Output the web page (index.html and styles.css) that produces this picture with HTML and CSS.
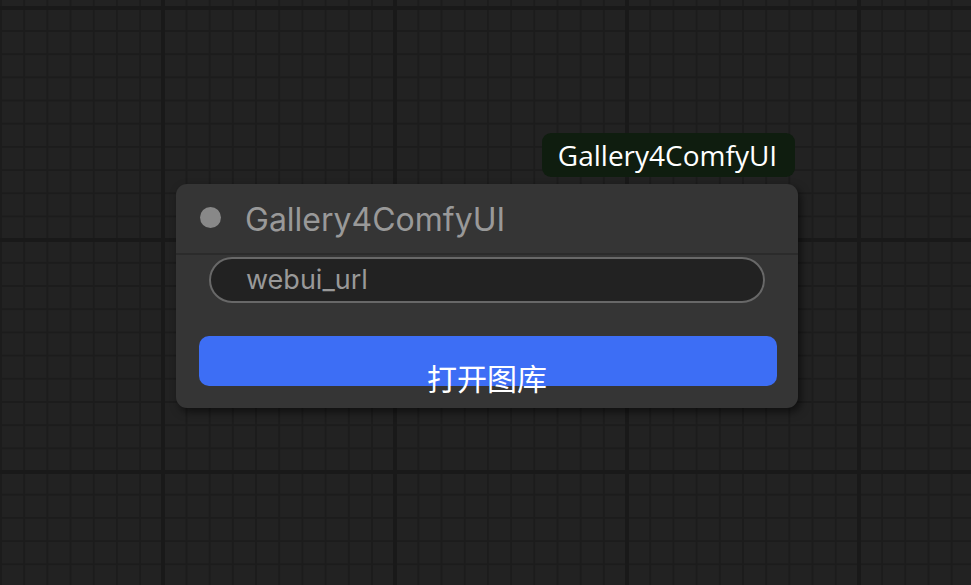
FILE: index.html
```html
<!DOCTYPE html>
<html lang="zh">
<head>
<meta charset="utf-8">
<title>Gallery4ComfyUI</title>
<link rel="stylesheet" href="styles.css">
</head>
<body>
<div class="canvas">
  <div class="tooltip">Gallery4ComfyUI</div>
  <div class="node">
    <div class="node-title">
      <span class="dot"></span>
      <span class="title-text">Gallery4ComfyUI</span>
    </div>
    <div class="node-body">
      <div class="text-widget">webui_url</div>
      <div class="button-widget"><span class="button-label">打开图库</span></div>
    </div>
  </div>
</div>
</body>
</html>
```
FILE: styles.css
```css
html, body {
  margin: 0;
  padding: 0;
  width: 100%;
  height: 100%;
  overflow: hidden;
}
body {
  background-color: #222222;
  font-family: Inter, "Liberation Sans", "Noto Sans CJK SC", sans-serif;
}
.canvas {
  position: relative;
  width: 971px;
  height: 585px;
  background-color: #222222;
  background-image:
    linear-gradient(to right, #191919 0, #191919 4px, transparent 4px),
    linear-gradient(to bottom, #191919 0, #191919 4px, transparent 4px),
    linear-gradient(to right, #1c1c1c 0, #1c1c1c 2px, transparent 2px),
    linear-gradient(to bottom, #1c1c1c 0, #1c1c1c 2px, transparent 2px);
  background-size: 232px 232px, 232px 232px, 23.2px 23.2px, 23.2px 23.2px;
  background-position: 161px 0, 0 6px, 0 0, 0 6.8px;
}
.tooltip {
  position: absolute;
  left: 542px;
  top: 133px;
  width: 253px;
  height: 44px;
  box-sizing: border-box;
  background: #0f1d0f;
  border-radius: 9px;
  color: #ffffff;
  font-family: "Open Sans", "Noto Sans", sans-serif;
  font-size: 28px;
  line-height: 44px;
  text-align: center;
  padding-right: 2px;
}
.node {
  position: absolute;
  left: 176px;
  top: 184px;
  width: 622px;
  height: 224px;
  background: #353535;
  border-radius: 11px;
  box-shadow: 3px 4px 8px rgba(0, 0, 0, 0.55);
  display: flex;
  flex-direction: column;
}
.node-title {
  height: 69px;
  display: flex;
  align-items: center;
  border-bottom: 2px solid #2b2b2b;
  box-sizing: content-box;
}
.dot {
  width: 21px;
  height: 21px;
  border-radius: 50%;
  background: #888888;
  margin-left: 24px;
  margin-top: -2px;
}
.title-text {
  margin-left: 24px;
  color: #999999;
  font-size: 32px;
  margin-top: 1px;
}
.node-body {
  display: flex;
  flex-direction: column;
  padding-top: 2px;
}
.text-widget {
  margin: 0 33px;
  height: 46px;
  box-sizing: border-box;
  border: 2px solid #686868;
  border-radius: 23px;
  background: #222222;
  color: #999999;
  font-size: 27px;
  line-height: 42px;
  padding-left: 35px;
}
.button-widget {
  margin: 33px 21px 0 23px;
  height: 50px;
  background: #3d6ef5;
  border-radius: 10px;
  text-align: center;
  position: relative;
}
.button-label {
  display: block;
  color: #ffffff;
  font-family: "Noto Sans CJK SC", sans-serif;
  font-size: 30px;
  line-height: 34px;
  padding-top: 24px;
  padding-right: 2px;
}
```
